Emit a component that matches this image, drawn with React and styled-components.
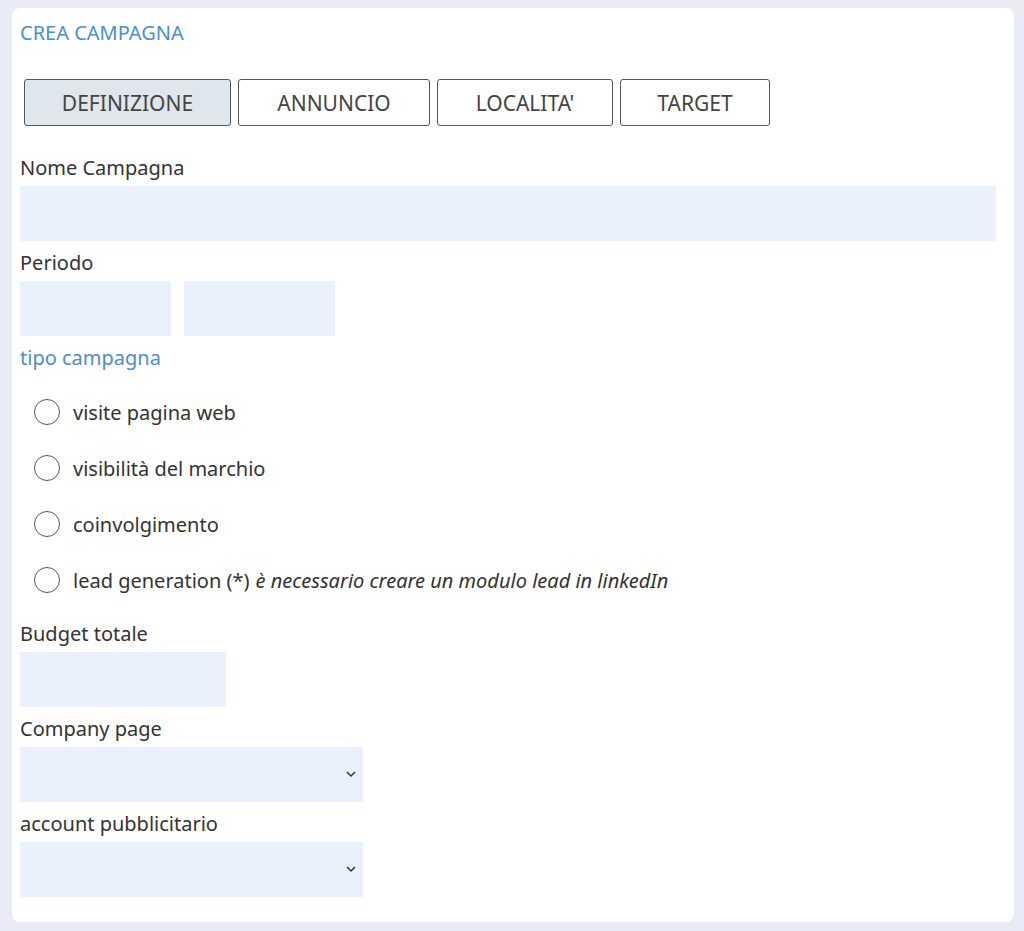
import React, { useState } from 'react';
import styled, { createGlobalStyle } from 'styled-components';

const Global = createGlobalStyle`
  body {
    margin: 0;
    background: #e9ebf6;
    font-family: "Noto Sans", "Open Sans", sans-serif;
    color: #333;
  }
`;

const Card = styled.div`
  margin: 8px 10px 9px 12px;
  background: #fff;
  border-radius: 8px;
  padding: 7px 18px 25px 8px;
`;

const Title = styled.div`
  color: #4a8fd0;
  font-size: 20px;
  line-height: 36px;
  margin-bottom: 28px;
`;

const Tabs = styled.div`
  display: flex;
  gap: 7px;
  padding-left: 4px;
  margin-bottom: 20px;
`;

const Tab = styled.button`
  width: ${p => p.w}px;
  height: 47px;
  border: 1px solid #555;
  border-radius: 3px;
  background: ${p => (p.active ? '#dfe6ec' : '#fff')};
  font-family: inherit;
  font-size: 21px;
  color: #444;
  cursor: pointer;
`;

const Label = styled.div`
  font-size: 20px;
  line-height: 36px;
  padding-top: ${p => p.top || 4}px;
  color: ${p => (p.blue ? '#4a8fd0' : '#333')};
  margin-bottom: ${p => p.mb || 0}px;
`;

const Input = styled.input`
  display: block;
  box-sizing: border-box;
  width: ${p => p.w || '100%'};
  height: 55px;
  border: none;
  background: #eaf1fc;
  outline: none;
`;

const Row = styled.div`
  display: flex;
  gap: 13px;
`;

const SelectWrap = styled.div`
  position: relative;
  width: 343px;
  height: 55px;
  background: #eaf1fc;
  svg {
    position: absolute;
    right: 6px;
    top: 22px;
  }
`;

const Radio = styled.label`
  display: flex;
  align-items: center;
  height: 56px;
  padding-left: 14px;
  font-size: 20px;
  cursor: pointer;
  em { margin-left: 6px; }
`;

const Circle = styled.span`
  width: 26px;
  height: 26px;
  border: 1.5px solid #555;
  border-radius: 50%;
  margin-right: 13px;
  box-sizing: border-box;
  background: ${p => (p.on ? 'radial-gradient(#4a8fd0 40%, #fff 45%)' : '#fff')};
`;

const Chevron = () => (
  <svg width="12" height="10" viewBox="0 0 12 10">
    <path d="M2 3 L6 7 L10 3" fill="none" stroke="#333" strokeWidth="1.5" />
  </svg>
);

const Select = () => (
  <SelectWrap><Chevron /></SelectWrap>
);

export default function App() {
  const [tipo, setTipo] = useState(null);
  const tabs = [['DEFINIZIONE', 207], ['ANNUNCIO', 192], ["LOCALITA'", 176], ['TARGET', 150]];
  const opts = ['visite pagina web', 'visibilità del marchio', 'coinvolgimento', 'lead generation (*)'];
  return (
    <>
      <Global />
      <Card>
        <Title>CREA CAMPAGNA</Title>
        <Tabs>
          {tabs.map(([t, w], i) => <Tab key={t} w={w} active={i === 0}>{t}</Tab>)}
        </Tabs>
        <Label>Nome Campagna</Label>
        <Input w="976px" />
        <Label>Periodo</Label>
        <Row>
          <Input w="151px" />
          <Input w="151px" />
        </Row>
        <Label blue mb={8}>tipo campagna</Label>
        {opts.map((o, i) => (
          <Radio key={o} onClick={() => setTipo(i)}>
            <Circle on={tipo === i} />
            {o}
            {i === 3 && <em>è necessario creare un modulo lead in linkedIn</em>}
          </Radio>
        ))}
        <Label top={8}>Budget totale</Label>
        <Input w="206px" />
        <Label>Company page</Label>
        <Select />
        <Label>account pubblicitario</Label>
        <Select />
      </Card>
    </>
  );
}
